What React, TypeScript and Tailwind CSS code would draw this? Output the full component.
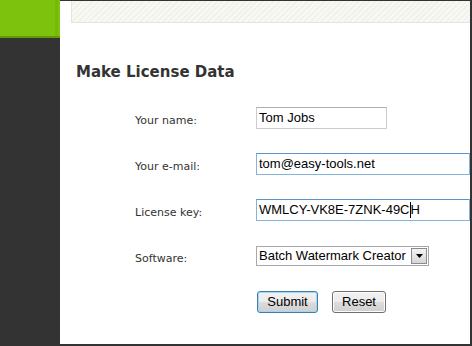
import React from "react";

const inputBase =
  "h-[22px] border bg-white flex items-center px-[2px] whitespace-nowrap overflow-hidden text-[13px] text-black font-['Liberation_Sans',Arial,sans-serif]";

function Row({ label, children }: { label: string; children: React.ReactNode }) {
  return (
    <div className="h-[46px] flex items-center shrink-0">
      <div className="w-[196px] pl-[75px] pt-[4px] text-[11px] leading-[13px] text-[#333] font-['DejaVu_Sans',Verdana,sans-serif]">
        {label}
      </div>
      {children}
    </div>
  );
}

export default function App() {
  return (
    <div className="w-[472px] h-[346px] flex overflow-hidden bg-white">
      <div className="w-[60px] shrink-0 flex flex-col">
        <div className="h-[38px] bg-[#7dc30d] border-b-2 border-[#5f9c0a] flex">
          <div className="ml-[55px] w-[3px] bg-[#76b90c]" />
        </div>
        <div className="flex-1 bg-[#333333]" />
      </div>
      <div className="flex-1 min-w-0 flex flex-col border-t border-r-2 border-b-2 border-[#333333] overflow-hidden">
        <div className="ml-[11px] h-[22px] shrink-0 border-l border-b border-[#e4e4e4] bg-[repeating-linear-gradient(135deg,#f8f9f4_0px,#f8f9f4_2px,#f1f3e9_2px,#f1f3e9_4px)]" />
        <h1 className="ml-[16px] mt-[40px] text-[15px] leading-[18px] font-bold text-[#333] font-['DejaVu_Sans',Verdana,sans-serif] whitespace-nowrap">
          Make License Data
        </h1>
        <div className="mt-[14px] flex flex-col">
          <Row label="Your name:">
            <div className={`${inputBase} w-[131px] border-[#c9ccd2] border-t-[#abadb3]`}>Tom Jobs</div>
          </Row>
          <Row label="Your e-mail:">
            <div className={`${inputBase} w-[214px] shrink-0 border-[#86b3dc] border-t-[#5d94c9]`}>tom@easy-tools.net</div>
          </Row>
          <Row label="License key:">
            <div className={`${inputBase} w-[214px] shrink-0 border-[#86b3dc] border-t-[#5d94c9]`}>
              <span>WMLCY-VK8E-7ZNK-49C</span>
              <span className="inline-block w-[1px] h-[16px] bg-black" />
              <span>H</span>
            </div>
          </Row>
          <Row label="Software:">
            <div className="w-[173px] h-[20px] border border-[#a5a9ae] bg-white flex items-center justify-between pl-[2px] pr-[1px] text-[13px] text-black font-['Liberation_Sans',Arial,sans-serif] whitespace-nowrap">
              <span>Batch Watermark Creator</span>
              <div className="w-[16px] h-[16px] border border-[#8c8c8c] bg-[linear-gradient(#f4f4f4,#d6d6d6)] flex items-center justify-center">
                <svg width="7" height="4" viewBox="0 0 7 4">
                  <path d="M0 0H7L3.5 4Z" fill="#000" />
                </svg>
              </div>
            </div>
          </Row>
          <div className="h-[46px] flex items-center shrink-0 pl-[197px] gap-[14px]">
            <div className="w-[61px] h-[22px] border border-[#3c7fb1] rounded-[3px] bg-[linear-gradient(#f2f2f2_0%,#ebebeb_50%,#dddddd_50%,#cfcfcf_100%)] shadow-[inset_0_0_0_1px_#a7d5ef] flex items-center justify-center text-[13px] text-black font-['Liberation_Sans',Arial,sans-serif]">
              Submit
            </div>
            <div className="w-[54px] h-[22px] border border-[#707070] rounded-[3px] bg-[linear-gradient(#f2f2f2_0%,#ebebeb_50%,#dddddd_50%,#cfcfcf_100%)] shadow-[inset_0_0_0_1px_#fcfcfc] flex items-center justify-center text-[13px] text-black font-['Liberation_Sans',Arial,sans-serif]">
              Reset
            </div>
          </div>
        </div>
      </div>
    </div>
  );
}
